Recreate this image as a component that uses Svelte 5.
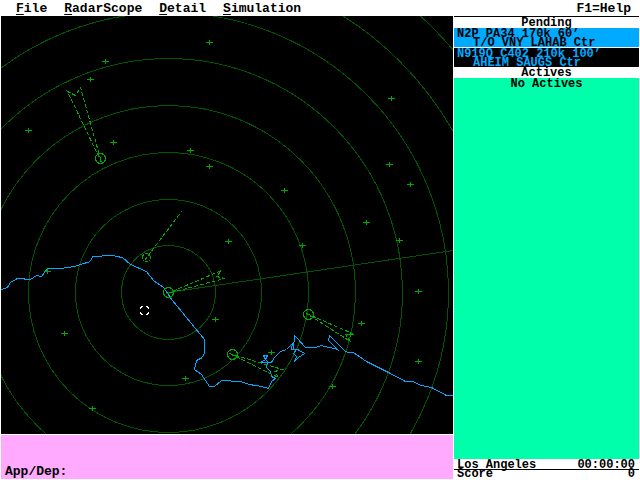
<script>
  const menus = ['File', 'RadarScope', 'Detail', 'Simulation'];

  const pending = [
    { id: 'N2P', line: 'N2P PA34 170k 60’', route: 'T/O VNY LAHAB Ctr' },
    { id: 'N919Q', line: 'N919Q C402 210k 100’', route: 'AHEIM SAUGS Ctr' }
  ];

  let selected = 'N2P';
  let command = '';

  const center = { x: 168.5, y: 292.5 };
  const rings = [47, 93, 140, 187, 234, 280, 327, 374];

  // navigation fixes
  const fixes = [
    [209, 42], [105, 61], [90, 79], [28, 130], [113, 142], [190, 150],
    [209, 166], [391, 98], [389, 164], [47, 271], [228, 241], [215, 319],
    [284, 190], [366, 222], [302, 245], [399, 240], [410, 184], [418, 291],
    [64, 333], [185, 378], [92, 408], [271, 352], [361, 323], [418, 361],
    [332, 386], [350, 334]
  ];

  // airports with their approach cones
  const airports = [
    { x: 100.5, y: 158.5, r: 5, cone: '101,162 67,91 75,95 80,87 101,162' },
    { x: 146.5, y: 257.5, r: 4, cone: '144,260 181,211' },
    { x: 168.5, y: 292.5, r: 5, cone: '167,293 221,270 216,276 224,278 167,293' },
    { x: 232.5, y: 354.5, r: 5, cone: '229,353 282,369 274,371 278,377 229,353' },
    { x: 308.5, y: 314.5, r: 5, cone: '306,313 354,334 345,334 350,341 306,313' }
  ];

  const coast =
    '1,289 7,287 10,282 17,278 23,278 25,279 30,279 36,275 41,276 47,268 60,268 ' +
    '74,266 80,264 90,261 92,256 98,256 105,255 113,255 116,256 122,257 130,264 ' +
    '146,271 153,280 163,287 172,300 204,339 204,352 202,357 196,360 194,369 ' +
    '201,374 209,386 214,386 221,380 240,381 249,384 261,386 268,388 271,381 ' +
    '275,378 271,376 270,371 266,367 267,362 260,362 265,359 263,355 267,355 ' +
    '265,359 268,362 271,362 274,357 280,351 286,349 292,343 291,349 296,349 ' +
    '293,353 296,356 294,361 298,357 304,353 297,349 293,349 294,335 297,338 ' +
    '305,347 315,347 321,345 328,347 335,348 338,350 328,340 329,335 344,350 ' +
    '347,352 353,352 366,361 378,367 388,372 405,381 412,381 421,385 431,387 ' +
    '446,395 453,395';
</script>

<div class="window">
  <nav class="menu">
    {#each menus as name}
      <button><u>{name[0]}</u>{name.slice(1)}</button>
    {/each}
    <button class="help">F1=Help</button>
  </nav>

  <main>
    <section class="left">
      <svg class="scope" viewBox="1 16 452 418" preserveAspectRatio="xMinYMin slice" role="img" aria-label="Radar scope">
        <g class="rings">
          {#each rings as r}
            <circle cx={center.x} cy={center.y} {r} />
          {/each}
          <line x1="168" y1="292.5" x2="453" y2="250.5" />
        </g>
        <polyline class="coast" points={coast} transform="translate(0.5 0.5)" />
        <g class="fixes">
          {#each fixes as [x, y]}
            <path d="M{x - 3} {y + 0.5}h7M{x + 0.5} {y - 2}v5" />
          {/each}
        </g>
        <g class="airports">
          {#each airports as a}
            <circle cx={a.x} cy={a.y} r={a.r} />
            <polyline points={a.cone} transform="translate(0.5 0.5)" />
          {/each}
        </g>
        <path
          class="cursor"
          d="M140.5 309V308L142 306.5H143M146 306.5H147L148.5 308V309M148.5 312V313L147 314.5H146M143 314.5H142L140.5 313V312"
        />
      </svg>

      <form class="command" on:submit|preventDefault={() => (command = '')}>
        <label for="command">App/Dep:</label>
        <input id="command" bind:value={command} autocomplete="off" />
      </form>
    </section>

    <aside>
      <h2>Pending</h2>
      <div class="strips">
        {#each pending as p}
          <button class="strip" class:selected={selected === p.id} on:click={() => (selected = p.id)}>
            <span>{p.line}</span>
            <span class="route">{p.route}</span>
          </button>
        {/each}
      </div>
      <h2>Actives</h2>
      <div class="actives">No Actives</div>
      <div class="status">
        <span>Los Angeles</span>
        <span>00:00:00</span>
      </div>
      <div class="status score">
        <span>Score</span>
        <span>0</span>
      </div>
    </aside>
  </main>
</div>

<style>
  :global(body) {
    margin: 0;
    background: #fff;
  }

  .window {
    box-sizing: border-box;
    min-height: 100vh;
    padding: 0 1px 1px;
    display: flex;
    flex-direction: column;
    color: #000;
    font: bold 13px/16px 'Liberation Mono', 'Courier New', monospace;
  }

  button,
  input {
    margin: 0;
    padding: 0;
    border: 0;
    border-radius: 0;
    background: none;
    color: inherit;
    font: inherit;
    text-align: left;
  }

  .menu {
    display: flex;
    gap: 17px;
    box-sizing: border-box;
    height: 16px;
    padding: 1px 8px 0 15px;
    line-height: 15px;
  }

  .help {
    margin-left: auto;
  }

  u {
    text-underline-offset: 2px;
  }

  main {
    flex: 1;
    display: grid;
    grid-template-columns: 1fr 185px;
    gap: 1px;
  }

  .left {
    display: flex;
    flex-direction: column;
    gap: 1px;
  }

  .scope {
    flex: 1 1 0;
    min-height: 0;
    width: 100%;
    background: #000;
    fill: none;
    shape-rendering: crispEdges;
  }

  .rings {
    stroke: #005500;
  }

  .coast {
    stroke: #00aaff;
  }

  .fixes,
  .airports {
    stroke: #00aa00;
  }

  .airports polyline {
    stroke-dasharray: 4 2;
  }

  .cursor {
    stroke: #fff;
  }

  .command {
    box-sizing: border-box;
    height: 44px;
    padding: 0 4px;
    display: flex;
    align-items: flex-end;
    background: #ffaaff;
    line-height: 14px;
  }

  .command input {
    flex: 1;
    min-width: 0;
    height: 14px;
    outline: none;
  }

  aside {
    display: flex;
    flex-direction: column;
    border-top: 1px solid #000;
    font-size: 12px;
    line-height: 12px;
  }

  h2 {
    height: 11px;
    margin: 0;
    font: inherit;
    text-align: center;
  }

  .strips {
    display: flex;
    flex-direction: column;
    gap: 1px;
  }

  .strip {
    box-sizing: border-box;
    height: 19px;
    padding: 2px 3px 0;
    display: flex;
    flex-direction: column;
    line-height: 9px;
    background: #000;
    color: #00aaff;
    white-space: pre;
  }

  .strip.selected {
    background: #00aaff;
    color: #000;
  }

  .route {
    padding-left: 16px;
  }

  .actives {
    flex: 1;
    background: #00ffaa;
    text-align: center;
  }

  .status {
    height: 10px;
    display: flex;
    justify-content: space-between;
    padding: 0 4px 0 3px;
  }

  .score {
    height: 9px;
    border-top: 1px solid #000;
    line-height: 9px;
  }
</style>
